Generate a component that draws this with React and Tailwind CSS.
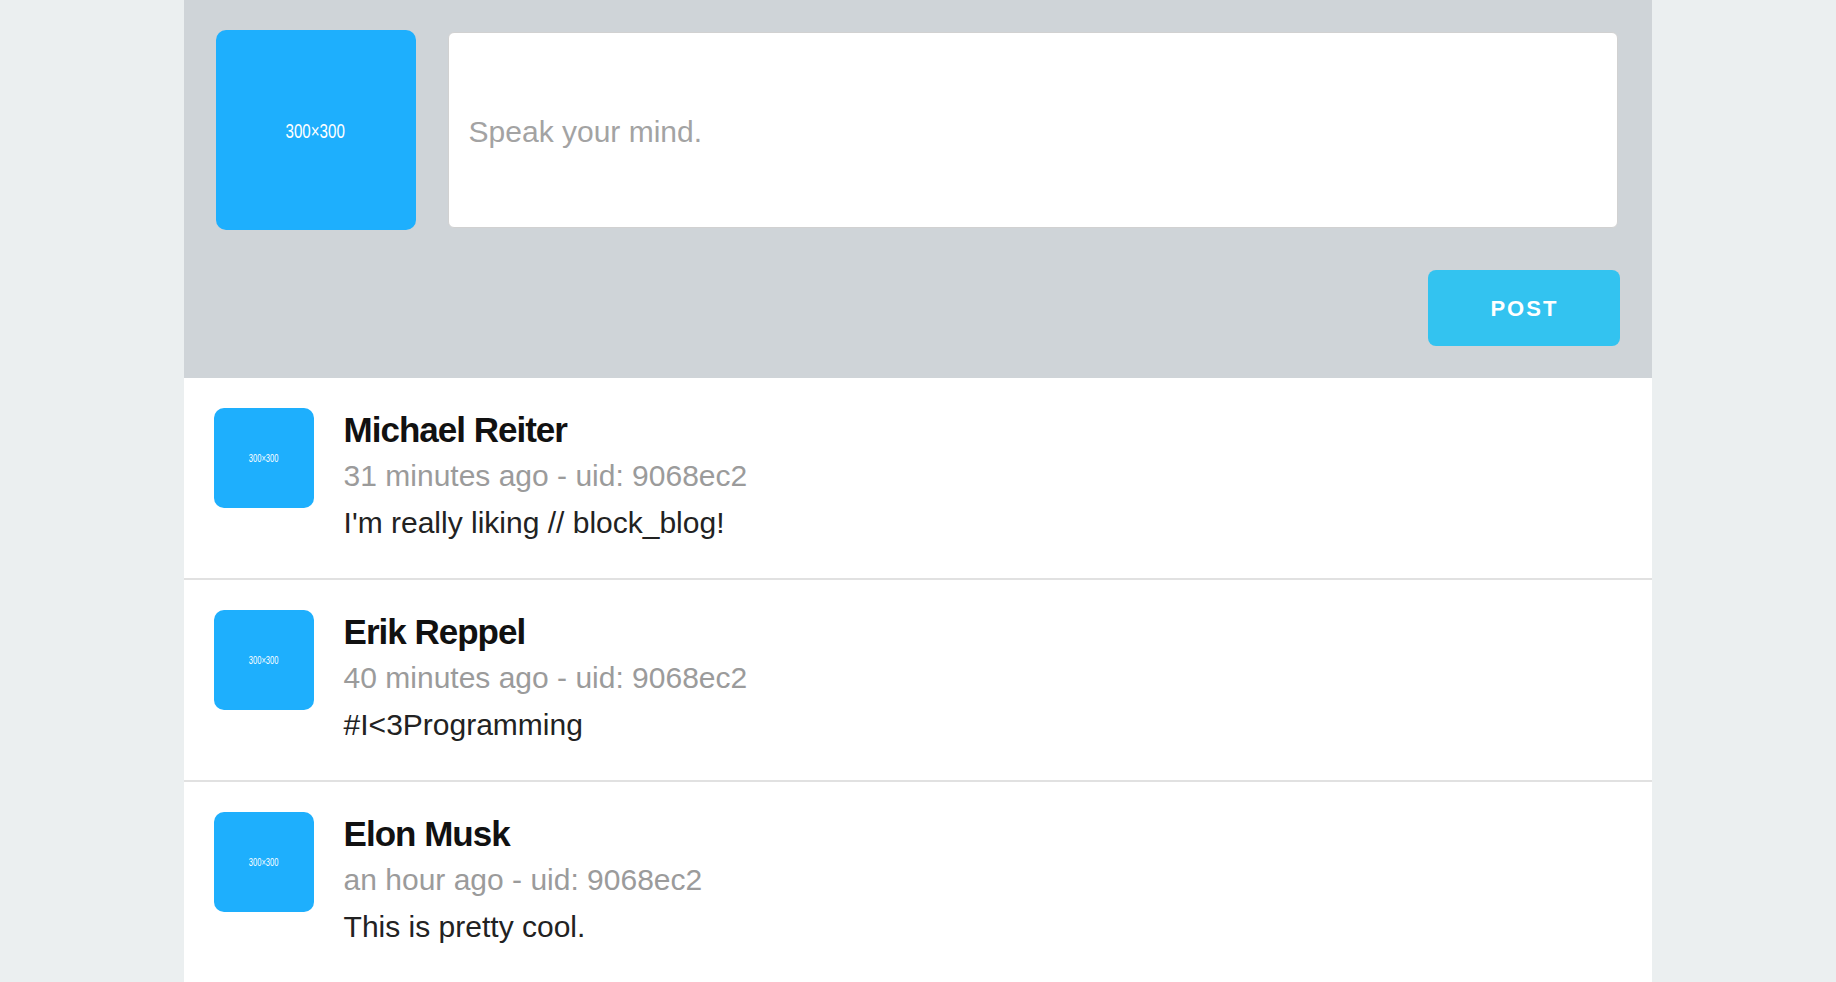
const posts = [
  { name: "Michael Reiter", when: "31 minutes ago", uid: "9068ec2", text: "I'm really liking // block_blog!" },
  { name: "Erik Reppel", when: "40 minutes ago", uid: "9068ec2", text: "#I<3Programming" },
  { name: "Elon Musk", when: "an hour ago", uid: "9068ec2", text: "This is pretty cool." },
];

const Placeholder = ({ big }) =>
  big ? (
    <div className="w-[200px] h-[200px] shrink-0 rounded-[10px] bg-[#1eaffd] flex items-center justify-center">
      <span className="text-white text-[21px] leading-none scale-x-[0.72]">300×300</span>
    </div>
  ) : (
    <div className="w-[100px] h-[100px] shrink-0 rounded-[10px] bg-[#1eaffd] flex items-center justify-center">
      <span className="text-white text-[10.5px] leading-none scale-x-[0.72]">300×300</span>
    </div>
  );

const Post = ({ name, when, uid, text }) => (
  <div className="flex gap-[30px] pl-[30px] pr-8 pt-[30px] pb-[31px] border-b-2 border-[#e1e1e1]">
    <Placeholder />
    <div className="flex flex-col">
      <div className="text-[35px] leading-[44px] font-bold tracking-[-1px] text-[#111]">{name}</div>
      <div className="text-[30px] leading-[47px] text-[#9b9b9b]">
        {when} - uid: {uid}
      </div>
      <div className="text-[30px] leading-[48px] text-[#222]">{text}</div>
    </div>
  </div>
);

export default function App() {
  return (
    <div className="min-h-screen bg-[#ebeff0] font-['Liberation_Sans',Arial,sans-serif]">
      <div className="w-[80%] mx-auto min-h-screen bg-white">
        <div className="bg-[#cfd4d8] px-8 pt-[30px] pb-8">
          <div className="flex items-start gap-8">
            <Placeholder big />
            <input
              type="text"
              placeholder="Speak your mind."
              className="flex-1 min-w-0 h-[196px] mt-[2px] mr-[2px] px-5 pt-[4px] bg-white border border-[#d1d1d1] rounded-[6px] text-[30px] text-[#222] placeholder:text-[#a3a3a3] outline-none"
            />
          </div>
          <div className="flex justify-end mt-10">
            <button className="w-[192px] h-[76px] rounded-[8px] bg-[#33c3f0] text-white text-[22px] font-bold uppercase tracking-[2px]">
              Post
            </button>
          </div>
        </div>
        {posts.map((p) => (
          <Post key={p.name} {...p} />
        ))}
      </div>
    </div>
  );
}
